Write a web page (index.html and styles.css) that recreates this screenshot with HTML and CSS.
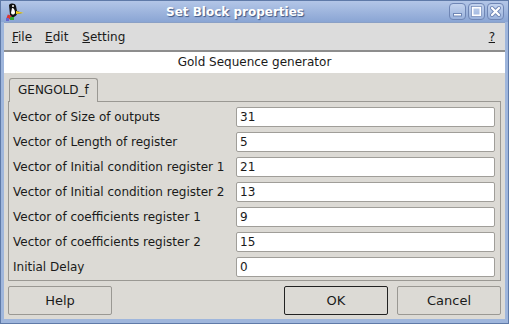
FILE: index.html
```html
<!DOCTYPE html>
<html>
<head>
<meta charset="utf-8">
<link rel="stylesheet" href="styles.css">
</head>
<body>
<div class="window">
  <div class="titlebar">
    <div class="app-icon">
      <svg width="22" height="20" viewBox="0 0 22 20">
        <path d="M5 3 C7 1 11 1 12 4 L13 9 L18 11 L13 12 C11 16 7 16 6 13 Z" fill="#111"/>
        <path d="M8 6 C10 6 11 8 11 11 C10 13 8 13 7 11 Z" fill="#fff"/>
        <path d="M12 9 L20 11 L12 12 Z" fill="#f2d21a"/>
        <circle cx="9" cy="4" r="1" fill="#fff"/>
        <rect x="3" y="13" width="4" height="4" fill="#d33" transform="rotate(20 5 15)"/>
        <rect x="6" y="15" width="4" height="3" fill="#3a3"/>
        <rect x="2" y="16" width="3" height="3" fill="#66c"/>
      </svg>
    </div>
    <div class="title">Set Block properties</div>
    <div class="wm-buttons">
      <span class="wm-btn"><svg width="15" height="15" viewBox="0 0 15 15"><rect x="3.5" y="9.5" width="8" height="2.5" fill="#fff" stroke="#6f86b5" stroke-width="1"/></svg></span>
      <span class="wm-btn"><svg width="15" height="15" viewBox="0 0 15 15"><rect x="3.5" y="3.5" width="8" height="8" fill="none" stroke="#fff" stroke-width="2"/><rect x="2.5" y="2.5" width="10" height="10" fill="none" stroke="#6f86b5" stroke-width="0.7"/></svg></span>
      <span class="wm-btn"><svg width="15" height="15" viewBox="0 0 15 15"><path d="M4 4 L11 11 M11 4 L4 11" stroke="#6f86b5" stroke-width="4" stroke-linecap="round"/><path d="M4 4 L11 11 M11 4 L4 11" stroke="#fff" stroke-width="2.2" stroke-linecap="round"/></svg></span>
    </div>
  </div>
  <div class="client">
    <div class="menubar">
      <span class="menu m-file"><u>F</u>ile</span>
      <span class="menu m-edit"><u>E</u>dit</span>
      <span class="menu"><u>S</u>etting</span>
      <span class="menu help"><u>?</u></span>
    </div>
    <div class="heading">Gold Sequence generator</div>
    <div class="content">
      <div class="tabs">
        <div class="tab">GENGOLD_f</div>
      </div>
      <div class="panel">
        <div class="row"><span class="label">Vector of Size of outputs</span><span class="field">31</span></div>
        <div class="row"><span class="label">Vector of Length of register</span><span class="field">5</span></div>
        <div class="row"><span class="label">Vector of Initial condition register 1</span><span class="field">21</span></div>
        <div class="row"><span class="label">Vector of Initial condition register 2</span><span class="field">13</span></div>
        <div class="row"><span class="label">Vector of coefficients register 1</span><span class="field">9</span></div>
        <div class="row"><span class="label">Vector of coefficients register 2</span><span class="field">15</span></div>
        <div class="row"><span class="label">Initial Delay</span><span class="field">0</span></div>
      </div>
      <div class="buttons">
        <div class="btn">Help</div>
        <div class="spacer"></div>
        <div class="btn default">OK</div>
        <div class="btn">Cancel</div>
      </div>
    </div>
  </div>
</div>
</body>
</html>
```
FILE: styles.css
```css
* { box-sizing: border-box; }
html, body { margin: 0; padding: 0; }
body {
  width: 509px;
  height: 324px;
  overflow: hidden;
  font-family: "DejaVu Sans", sans-serif;
  font-size: 12px;
  color: #1a1a1a;
}
.window {
  width: 509px;
  height: 324px;
  background: #9fb6dc;
  border: 1px solid #5f7aa8;
  display: flex;
  flex-direction: column;
}
.titlebar {
  height: 21px;
  display: flex;
  align-items: center;
  background: linear-gradient(#b3c6e7, #8aa5d4);
}
.app-icon {
  width: 26px;
  padding-left: 3px;
  display: flex;
  align-items: center;
}
.title {
  flex: 1;
  text-align: center;
  font-weight: bold;
  font-size: 12px;
  color: #fff;
  text-shadow: 1px 1px 1px #3e5683;
  padding-right: 6px;
}
.wm-buttons {
  display: flex;
  gap: 2px;
  padding-right: 4px;
}
.wm-btn {
  width: 17px;
  height: 17px;
  border: 1px solid #6f86b5;
  border-radius: 4px;
  background: linear-gradient(#c3d3ee, #9ab2dc);
  display: flex;
  align-items: center;
  justify-content: center;
}
.client {
  flex: 1;
  margin: 0 3px 4px 3px;
  background: #dcdad5;
  display: flex;
  flex-direction: column;
  border-top: 1px solid #8aa0c6;
}
.menubar {
  height: 29px;
  background: #dcdcdc;
  border-bottom: 2px solid #8d8d8d;
  display: flex;
  align-items: center;
  padding: 0 8px;
  font-size: 12px;
}
.menu { margin-right: 14px; }
.m-file { margin-right: 13px; }
.menu.help { margin-left: auto; margin-right: 0; padding-right: 2px; }
.heading {
  height: 21px;
  background: #fff;
  text-align: center;
  font-size: 12px;
  line-height: 21px;
}
.content {
  flex: 1;
  padding: 4px 4px 0 4px;
  display: flex;
  flex-direction: column;
}
.tabs { display: flex; }
.tab {
  margin-left: 1px;
  height: 24px;
  width: 89px;
  border: 1px solid #9a9893;
  border-bottom: none;
  border-radius: 3px 3px 0 0;
  line-height: 22px;
  padding-left: 8px;
  background: #dcdad5;
  position: relative;
  top: 1px;
}
.panel {
  border: 1px solid #9a9893;
  padding: 5px 5px 3px 4px;
  display: flex;
  flex-direction: column;
  gap: 5px;
}
.row {
  display: flex;
  align-items: center;
  height: 20px;
}
.label { width: 223px; }
.field {
  flex: 1;
  height: 20px;
  background: #fff;
  border: 1px solid #a09e99;
  border-radius: 2px;
  padding-left: 3px;
  line-height: 18px;
}
.buttons {
  display: flex;
  gap: 9px;
  margin-top: 5px;
}
.spacer { flex: 1; }
.btn {
  width: 104px;
  height: 29px;
  border: 1px solid #9a9893;
  border-radius: 2px;
  background: #dcdad5;
  display: flex;
  align-items: center;
  justify-content: center;
  font-size: 13px;
}
.btn.default { border: 1px solid #222; }
```
